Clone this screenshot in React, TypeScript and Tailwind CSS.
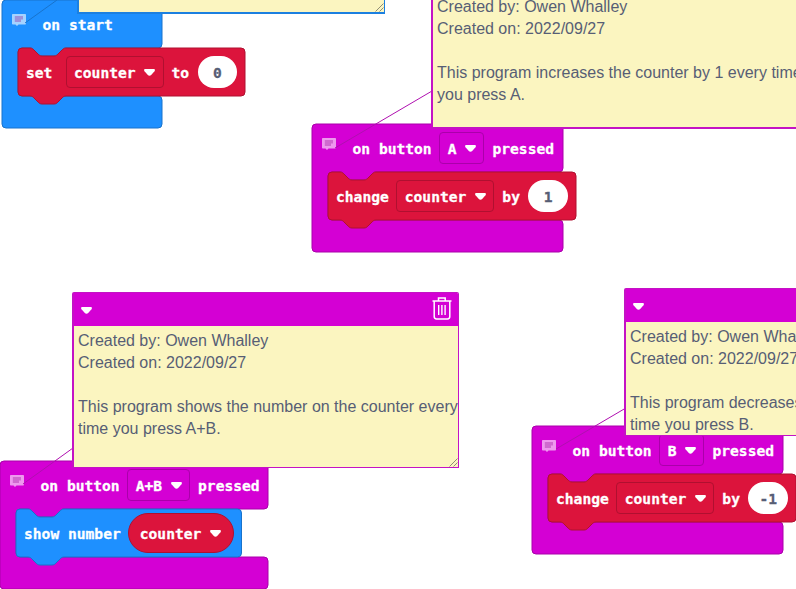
import type { ReactNode } from "react";

type Tone = "blue" | "magenta" | "red";

const shapeTone: Record<Tone, string> = {
  blue: "fill-[#1e90ff] stroke-[#1873cc]",
  magenta: "fill-[#d400d4] stroke-[#aa00aa]",
  red: "fill-[#dc143c] stroke-[#b01030]",
};

const NOTCH_DOWN =
  "c2,0 3,1 4,2 l4,4 c1,1 2,2 4,2 h12 c2,0 3,-1 4,-2 l4,-4 c1,-1 2,-2 4,-2";
const NOTCH_BACK =
  "c-2,0 -3,1 -4,2 l-4,4 c-1,1 -2,2 -4,2 h-12 c-2,0 -3,-1 -4,-2 l-4,-4 c-1,-1 -2,-2 -4,-2";

function Caret() {
  return (
    <svg width="11" height="7" viewBox="0 0 11 7" className="block shrink-0 fill-white">
      <path d="M1.2,0 H9.8 C10.9,0 11.2,1.4 10.5,2.2 L7.2,5.9 C6.3,6.9 4.7,6.9 3.8,5.9 L0.5,2.2 C-0.2,1.4 0.1,0 1.2,0 Z" />
    </svg>
  );
}

function Label({ children }: { children: ReactNode }) {
  return <span className="relative top-px whitespace-pre">{children}</span>;
}

function Dropdown({ children, tone }: { children: ReactNode; tone: Tone }) {
  return (
    <span
      className={`-ml-[0.5px] flex h-8 shrink-0 items-center gap-[8.5px] rounded-[4px] border pr-[7.5px] pl-[7.5px] ${
        tone === "red" ? "border-[#b01030]" : "border-[#aa00aa]"
      }`}
    >
      <Label>{children}</Label>
      <Caret />
    </span>
  );
}

function NumberField({ children }: { children: ReactNode }) {
  return (
    <span className="ml-[0.5px] flex h-8 w-[39.5px] shrink-0 items-center justify-center rounded-full bg-white text-[#575e75]">
      <Label>{children}</Label>
    </span>
  );
}

function CommentIcon() {
  return (
    <svg width="15" height="13" viewBox="0 0 15 13" className="block">
      <path
        className="fill-white/60"
        d="M0.8,0 H13.2 Q14,0 14,0.8 V9.7 Q14,10.500 13.2,10.500 H6.500 L5,12 L3.500,10.500 H0.8 Q0,10.500 0,9.7 V0.8 Q0,0 0.8,0 Z"
      />
      <path className="fill-[#808]/30" d="M2.800,2 H11 V5.500 H9 V8 H2.800 Z" />
    </svg>
  );
}

function Statement({ tone, width, children }: { tone: Tone; width: number; children: ReactNode }) {
  return (
    <div className="relative h-12" style={{ width }}>
      <svg width={width} height="57" className="absolute top-0 left-0 overflow-visible">
        <path
          className={shapeTone[tone]}
          d={`M0,4 a4,4 0 0 1 4,-4 H12 ${NOTCH_DOWN} H${width - 4} a4,4 0 0 1 4,4 V44 a4,4 0 0 1 -4,4 H48 ${NOTCH_BACK} H4 a4,4 0 0 1 -4,-4 Z`}
        />
      </svg>
      <div className="relative flex h-full items-center gap-2 pl-2">{children}</div>
    </div>
  );
}

function EventBlock({
  tone,
  width,
  place,
  header,
  children,
}: {
  tone: Tone;
  width: number;
  place: string;
  header: ReactNode;
  children: ReactNode;
}) {
  return (
    <section className={`absolute h-32 ${place}`} style={{ width }}>
      <svg width={width} height="128" className="absolute top-0 left-0 overflow-visible">
        <path
          className={shapeTone[tone]}
          d={`M0,4 a4,4 0 0 1 4,-4 H${width - 4} a4,4 0 0 1 4,4 V44 a4,4 0 0 1 -4,4 H64 ${NOTCH_BACK} H20 a4,4 0 0 0 -4,4 V92 a4,4 0 0 0 4,4 H${width - 4} a4,4 0 0 1 4,4 V124 a4,4 0 0 1 -4,4 H4 a4,4 0 0 1 -4,-4 Z`}
        />
      </svg>
      <div className="relative flex h-12 items-center gap-2 pl-[9.5px]">
        <span className="mr-[8px] -mt-[7px]">
          <CommentIcon />
        </span>
        {header}
      </div>
      <div className="pl-4">{children}</div>
    </section>
  );
}

function TrashIcon() {
  return (
    <svg width="20" height="23" viewBox="0 0 20 23" className="block" fill="none" stroke="#fff">
      <path strokeWidth="1.5" d="M0.5,4 H19.5 M6.5,4 V1 H13.2 V4" />
      <path strokeWidth="1.5" d="M2.2,4 V19.6 Q2.2,22 4.5,22 H15.5 Q17.8,22 17.8,19.6 V4" />
      <path strokeWidth="1.4" d="M6.7,8 V18 M9.9,8 V18 M13.1,8 V18" />
    </svg>
  );
}

function Grip() {
  return (
    <svg width="9" height="9" viewBox="0 0 9 9" className="absolute right-0 bottom-0 stroke-[#8f8d75]">
      <path d="M0.5,8.5 L8.5,0.5 M4.5,8.5 L8.5,4.5" />
    </svg>
  );
}

function Note({
  place,
  tone,
  header,
  grip,
  lines,
  pad,
}: {
  place: string;
  tone: "blue" | "magenta";
  header?: boolean;
  grip?: boolean;
  lines: string[];
  pad: string;
}) {
  return (
    <aside
      className={`absolute flex flex-col overflow-hidden bg-[#fbf5c0] ${place} ${
        tone === "blue" ? "border-[#1c80e0]" : "border-[#c413c4]"
      }`}
    >
      {header && (
        <div className="flex h-[33px] shrink-0 items-center justify-between bg-[#d400d4] pr-1.5 pl-[7px]">
          <span className="mt-[2px]">
            <Caret />
          </span>
          <span className="-mt-[3px]">
            <TrashIcon />
          </span>
        </div>
      )}
      <div className={`whitespace-pre text-[16px] leading-[22px] text-[#575e75] ${pad}`}>
        {lines.map((line, i) => (
          <p key={i} className="h-[22px]">
            {line}
          </p>
        ))}
      </div>
      {grip && <Grip />}
    </aside>
  );
}

export default function App() {
  return (
    <main className="relative h-[589px] w-[796px] overflow-hidden bg-white font-['Liberation_Sans',sans-serif]">
      <div className="font-['DejaVu_Sans_Mono',monospace] text-[14.61px] leading-none font-bold text-white [-webkit-text-stroke:0.3px_currentColor]">
        <EventBlock
          tone="blue"
          width={160}
          place="top-0 left-[2px]"
          header={<Label>on start</Label>}
        >
          <Statement tone="red" width={227}>
            <span className="w-[32px]">
              <Label>set</Label>
            </span>
            <Dropdown tone="red">counter</Dropdown>
            <Label>to</Label>
            <NumberField>0</NumberField>
          </Statement>
        </EventBlock>

        <EventBlock
          tone="magenta"
          width={251}
          place="top-[124px] left-[312px]"
          header={
            <>
              <Label>on button</Label>
              <Dropdown tone="magenta">A</Dropdown>
              <Label>pressed</Label>
            </>
          }
        >
          <Statement tone="red" width={248}>
            <Label>change</Label>
            <Dropdown tone="red">counter</Dropdown>
            <Label>by</Label>
            <NumberField>1</NumberField>
          </Statement>
        </EventBlock>

        <EventBlock
          tone="magenta"
          width={268}
          place="top-[461px] left-0"
          header={
            <>
              <Label>on button</Label>
              <Dropdown tone="magenta">A+B</Dropdown>
              <Label>pressed</Label>
            </>
          }
        >
          <Statement tone="blue" width={225.5}>
            <Label>show number</Label>
            <span className="-ml-px flex h-10 items-center gap-[8.5px] rounded-full border border-[#b01030] bg-[#dc143c] pr-[12px] pl-[11px]">
              <Label>counter</Label>
              <Caret />
            </span>
          </Statement>
        </EventBlock>

        <EventBlock
          tone="magenta"
          width={251}
          place="top-[426px] left-[532px]"
          header={
            <>
              <Label>on button</Label>
              <Dropdown tone="magenta">B</Dropdown>
              <Label>pressed</Label>
            </>
          }
        >
          <Statement tone="red" width={248}>
            <Label>change</Label>
            <Dropdown tone="red">counter</Dropdown>
            <Label>by</Label>
            <NumberField>-1</NumberField>
          </Statement>
        </EventBlock>
      </div>

      {/* Connectors from each block to its comment */}
      <svg width="796" height="589" className="absolute inset-0 stroke-[#b010b0]">
        <path className="stroke-[#1873cc]" d="M57,0 L25,23" />
        <path d="M432,91 L335,148" />
        <path d="M73,448 L23,484" />
        <path d="M625,408.5 L556,449" />
      </svg>

      <Note
        place="-top-20 left-[77px] h-[94px] w-[308px] border-2 border-r-[1.5px]"
        tone="blue"
        grip
        pad=""
        lines={[]}
      />
      <Note
        place="-top-10 left-[431px] h-[169px] w-[388px] border-2"
        tone="magenta"
        pad="pl-[4px] pt-[34px]"
        lines={[
          "Created by: Owen Whalley",
          "Created on: 2022/09/27",
          "",
          "This program increases the counter by 1 every time",
          "you press A.",
        ]}
      />
      <Note
        place="top-[292px] left-[72px] h-[176px] w-[387px] rounded-t-[2px] border border-l-2"
        tone="magenta"
        header
        grip
        pad="pl-[4px] pt-[4px]"
        lines={[
          "Created by: Owen Whalley",
          "Created on: 2022/09/27",
          "",
          "This program shows the number on the counter every",
          "time you press A+B.",
        ]}
      />
      <Note
        place="top-[288px] left-[624px] h-[148px] w-[387px] rounded-t-[2px] border border-l-2"
        tone="magenta"
        header
        pad="pl-[4px] pt-[4px]"
        lines={[
          "Created by: Owen Whalley",
          "Created on: 2022/09/27",
          "",
          "This program decreases the counter by 1 every",
          "time you press B.",
        ]}
      />
    </main>
  );
}
